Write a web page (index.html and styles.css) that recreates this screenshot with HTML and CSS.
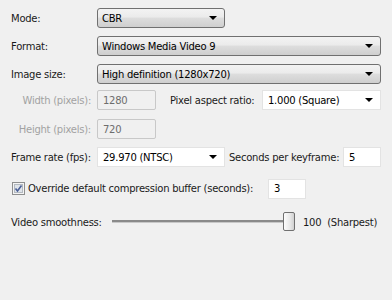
FILE: index.html
```html
<!DOCTYPE html>
<html lang="en">

<head>
    <meta charset="UTF-8" />
    <title>Video Settings</title>
    <link rel="stylesheet" href="styles.css">
</head>

<body>
    <div class="panel">
        <div class="row r1">
            <span class="lbl">Mode:</span>
            <div class="combo w-small"><span>CBR</span><i class="arrow"></i></div>
        </div>
        <div class="row r2">
            <span class="lbl">Format:</span>
            <div class="combo grow"><span>Windows Media Video 9</span><i class="arrow"></i></div>
        </div>
        <div class="row r3">
            <span class="lbl">Image size:</span>
            <div class="combo grow"><span>High definition (1280x720)</span><i class="arrow"></i></div>
        </div>
        <div class="row r4">
            <span class="lbl dis">Width (pixels):</span>
            <div class="text disabled w-dim">1280</div>
            <span class="lbl-inline par">Pixel aspect ratio:</span>
            <div class="combo edit w-par"><span>1.000 (Square)</span><i class="arrow"></i></div>
        </div>
        <div class="row r5">
            <span class="lbl dis">Height (pixels):</span>
            <div class="text disabled w-dim">720</div>
        </div>
        <div class="row r6">
            <span class="lbl">Frame rate (fps):</span>
            <div class="combo edit w-small"><span>29.970 (NTSC)</span><i class="arrow"></i></div>
            <span class="lbl-inline spk">Seconds per keyframe:</span>
            <div class="text w-num push">5</div>
        </div>
        <div class="row r7">
            <span class="check"><svg width="13" height="13" viewBox="0 0 13 13"><rect x="0.5" y="0.5" width="12" height="12" fill="#f4f4f4" stroke="#8e8f8f"/><rect x="2.5" y="2.5" width="8" height="8" fill="#dfe4ea" stroke="#b4bac1"/><path d="M3.5 6.5 L5.5 9 L9.5 3.5" fill="none" stroke="#4a5f97" stroke-width="1.6"/></svg></span>
            <span class="lbl-inline buf-lbl">Override default compression buffer (seconds):</span>
            <div class="text w-num">3</div>
        </div>
        <div class="row r8">
            <span class="lbl smooth">Video smoothness:</span>
            <div class="slider">
                <div class="track"></div>
                <div class="thumb"></div>
            </div>
            <span class="value">100&nbsp; (Sharpest)</span>
        </div>
    </div>
</body>

</html>
```

FILE: styles.css
```css
* {
    box-sizing: border-box;
    margin: 0;
    padding: 0;
}

body {
    background-color: #f0f0f0;
    font-family: "DejaVu Sans", Tahoma, sans-serif;
    font-size: 10px;
    letter-spacing: -0.25px;
    color: #1a1a1a;
    width: 392px;
    height: 300px;
    overflow: hidden;
}

.panel {
    display: flex;
    flex-direction: column;
    padding: 8px 11px 0 11px;
}

.row {
    display: flex;
    align-items: center;
    height: 20px;
}

.r2 { margin-top: 8px; }
.r3 { margin-top: 8px; }
.r4 { margin-top: 6px; }
.r5 { margin-top: 9px; }
.r6 { margin-top: 8px; }
.r7 { margin-top: 12px; height: 19px; }
.r8 { margin-top: 14px; height: 20px; }

.lbl {
    width: 86px;
    flex-shrink: 0;
    white-space: nowrap;
}

.lbl.dis {
    color: #a2a2a2;
    text-align: right;
    padding-right: 6px;
}

.lbl-inline {
    white-space: nowrap;
}

.par {
    margin-left: 14px;
    margin-right: 4px;
    flex: 1;
}

.spk {
    margin-left: 4px;
}

.combo {
    height: 20px;
    display: flex;
    align-items: center;
    justify-content: space-between;
    padding: 0 7px 0 4px;
    border: 1px solid #707070;
    border-radius: 3px;
    background: linear-gradient(#f3f3f3, #ebebeb 45%, #dddddd 50%, #cfcfcf);
    color: #000;
}

.combo.edit {
    background: #fff;
    border: 1px solid #e3e3e3;
    border-radius: 0;
    padding-left: 5px;
}

.grow {
    flex: 1;
}

.w-small {
    width: 128px;
}

.w-par {
    width: 119px;
}

.arrow {
    width: 0;
    height: 0;
    border-left: 4px solid transparent;
    border-right: 4px solid transparent;
    border-top: 4px solid #000;
}

.text {
    height: 20px;
    display: flex;
    align-items: center;
    padding-left: 5px;
    background: #fff;
    border: 1px solid #e3e3e3;
    color: #000;
}

.text.disabled {
    background: #f0f0f0;
    border-color: #c8c8c8;
    color: #6d6d6d;
    border-radius: 2px;
}

.w-dim {
    width: 59px;
}

.w-num {
    width: 38px;
}

.push {
    margin-left: auto;
}

.buf-lbl {
    width: 240px;
}

.check {
    display: flex;
    margin-left: 1px;
    margin-right: 3px;
}

.smooth {
    width: 101px;
}

.slider {
    position: relative;
    width: 183px;
    height: 20px;
}

.track {
    position: absolute;
    left: 0;
    right: 6px;
    top: 8px;
    height: 3px;
    background: #8a8a8a;
    border-bottom: 1px solid #c8c8c8;
}

.thumb {
    position: absolute;
    right: 0;
    top: 0;
    width: 12px;
    height: 19px;
    border: 1px solid #707070;
    border-radius: 2px;
    background: linear-gradient(90deg, #fcfcfc, #e8e8e8 60%, #d0d0d0);
}

.value {
    margin-left: 8px;
    white-space: nowrap;
}
```
